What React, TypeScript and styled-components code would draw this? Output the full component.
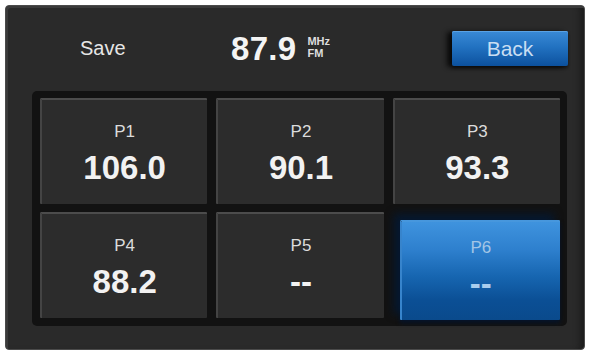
import React from "react";
import styled, { createGlobalStyle } from "styled-components";

const Global = createGlobalStyle`
  html, body { margin: 0; padding: 0; background: #ffffff; }
  body { font-family: "Liberation Sans", Arial, sans-serif; }
`;

const Panel = styled.div`
  margin: 5px;
  width: 578px;
  height: 343px;
  background: #2a2a2a;
  border: 1px solid #4a4a4a;
  border-radius: 4px;
  box-shadow: inset 2px 2px 0 #3a3a3a, inset -8px 0 6px -4px #1c1c1c;
  display: flex;
  flex-direction: column;
  box-sizing: content-box;
`;

const Header = styled.div`
  height: 85px;
  display: flex;
  align-items: center;
  padding: 0 16px 0 74px;
`;

const SaveLabel = styled.div`
  font-size: 20px;
  color: #e6e6e6;
  width: 151px;
`;

const Freq = styled.div`
  display: flex;
  align-items: center;
  gap: 11px;
`;

const FreqValue = styled.div`
  font-size: 33px;
  font-weight: bold;
  color: #f4f4f4;
  letter-spacing: 0.3px;
`;

const Units = styled.div`
  display: flex;
  flex-direction: column;
  font-size: 11px;
  font-weight: bold;
  line-height: 12px;
  color: #dedede;
  margin-top: -3px;
`;

const BackButton = styled.div`
  margin-left: auto;
  width: 116px;
  height: 35px;
  display: flex;
  align-items: center;
  justify-content: center;
  font-size: 21px;
  color: #c9def2;
  border-radius: 2px;
  background: linear-gradient(180deg, #3a8ad6 0%, #2272c1 45%, #0c519e 100%);
  box-shadow: -5px 1px 5px #0a0a0a, 0 2px 3px #151515, inset 0 1px 0 #5aa2e4;
`;

const GridFrame = styled.div`
  margin-left: 26px;
  width: 535px;
  height: 235px;
  box-sizing: border-box;
  padding: 7px 7px 8px 8px;
  background: #121212;
  border-radius: 5px;
  display: grid;
  grid-template-columns: repeat(3, 1fr);
  grid-template-rows: repeat(2, 1fr);
  gap: 8px 9px;
`;

const Cell = styled.div<{ $active?: boolean }>`
  display: flex;
  flex-direction: column;
  align-items: center;
  border-radius: 1px;
  box-sizing: border-box;
  padding-top: ${(p) => (p.$active ? "16px" : "22px")};
  background: ${(p) =>
    p.$active
      ? "linear-gradient(180deg, #3f93de 0%, #2e80ce 28%, #1766b1 55%, #0b4f95 80%, #0a4a8c 100%)"
      : "#2c2c2c"};
  border-top: 2px solid ${(p) => (p.$active ? "#4797dd" : "#4c4c4c")};
  border-left: 2px solid ${(p) => (p.$active ? "#3784cc" : "#444444")};
  margin: ${(p) => (p.$active ? "8px 0 -2px 7px" : "0")};
  box-shadow: ${(p) =>
    p.$active ? "-6px -6px 8px #051830, 0 3px 4px #06142a" : "none"};
`;

const CellLabel = styled.div<{ $active?: boolean }>`
  font-size: 17px;
  color: ${(p) => (p.$active ? "#a3c6e6" : "#dcdcdc")};
  line-height: 20px;
`;

const CellValue = styled.div<{ $active?: boolean }>`
  font-size: 33px;
  font-weight: bold;
  color: ${(p) => (p.$active ? "#a9cdee" : "#f2f2f2")};
  line-height: 38px;
  margin-top: 7px;
`;

const presets = [
  { label: "P1", value: "106.0" },
  { label: "P2", value: "90.1" },
  { label: "P3", value: "93.3" },
  { label: "P4", value: "88.2" },
  { label: "P5", value: "--" },
  { label: "P6", value: "--", active: true },
];

export default function App() {
  return (
    <>
      <Global />
      <Panel>
        <Header>
          <SaveLabel>Save</SaveLabel>
          <Freq>
            <FreqValue>87.9</FreqValue>
            <Units>
              <span>MHz</span>
              <span>FM</span>
            </Units>
          </Freq>
          <BackButton>Back</BackButton>
        </Header>
        <GridFrame>
          {presets.map((p) => (
            <Cell key={p.label} $active={p.active}>
              <CellLabel $active={p.active}>{p.label}</CellLabel>
              <CellValue $active={p.active}>{p.value}</CellValue>
            </Cell>
          ))}
        </GridFrame>
      </Panel>
    </>
  );
}
